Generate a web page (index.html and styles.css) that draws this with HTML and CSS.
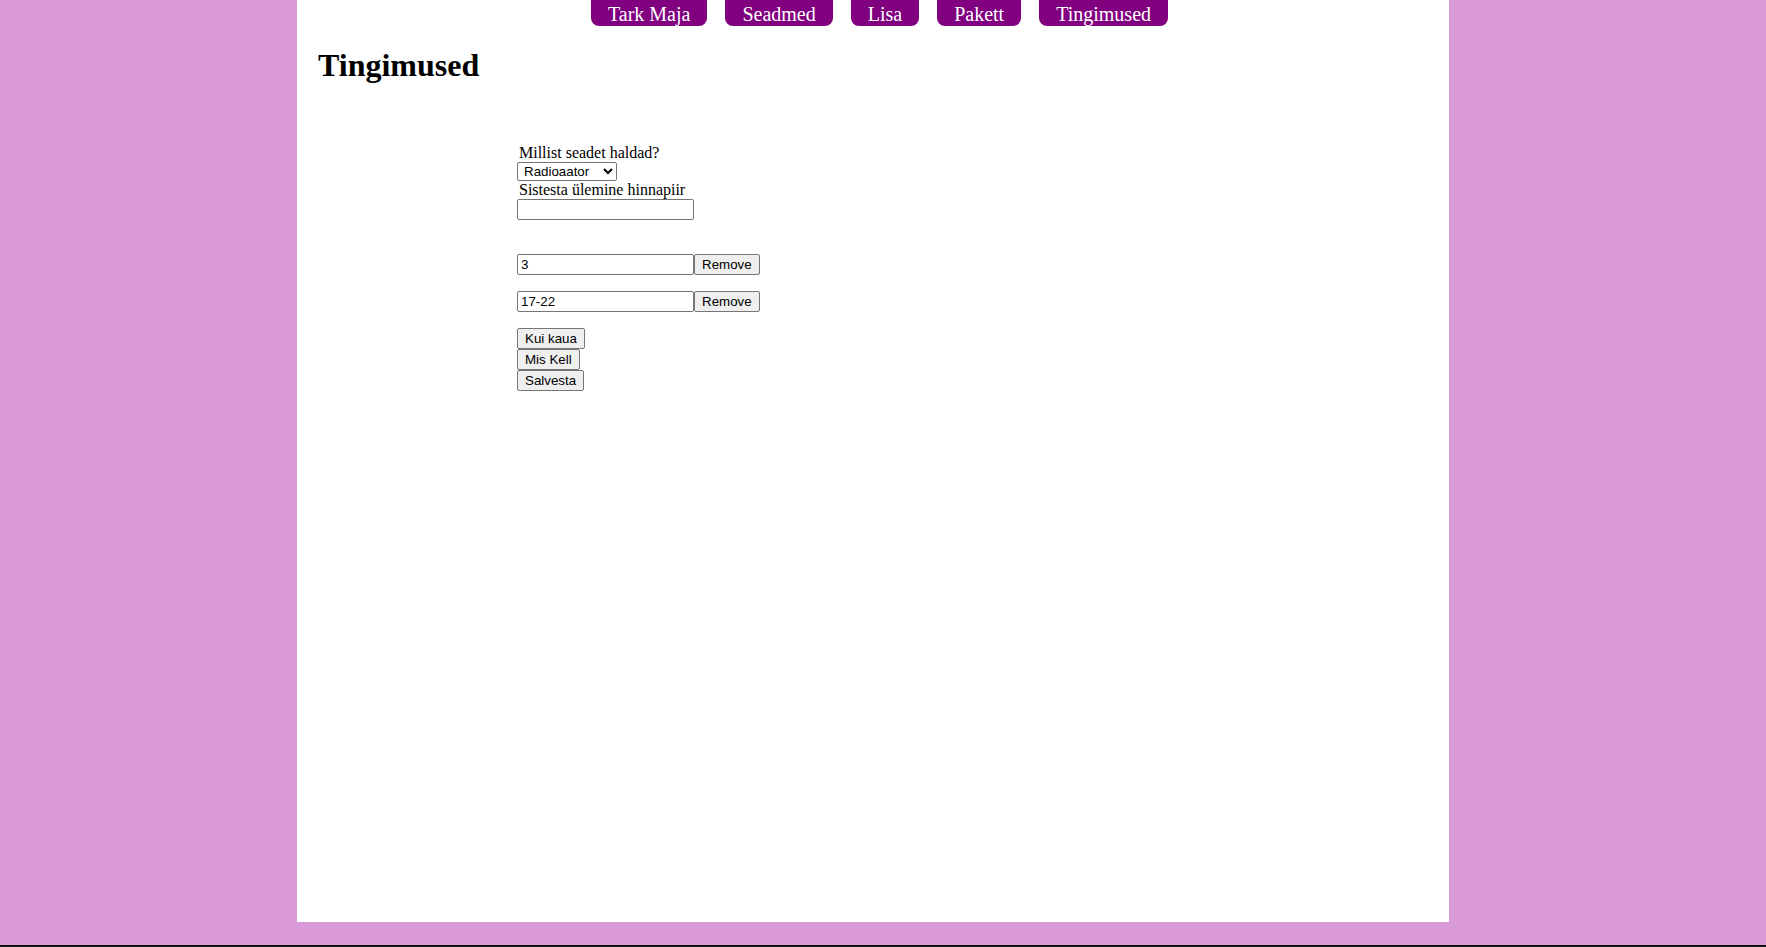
FILE: index.html
```html
<!DOCTYPE html>
<html lang="et">
<head>
<meta charset="utf-8">
<title>Tingimused</title>
<link rel="stylesheet" href="styles.css">
</head>
<body>
<div class="page">
  <div class="container">
    <nav class="nav">
      <a class="nav-btn" href="#">Tark Maja</a>
      <a class="nav-btn" href="#">Seadmed</a>
      <a class="nav-btn" href="#">Lisa</a>
      <a class="nav-btn" href="#">Pakett</a>
      <a class="nav-btn" href="#">Tingimused</a>
    </nav>
    <h1 class="title">Tingimused</h1>
    <form class="form">
      <label class="label">Millist seadet haldad?</label>
      <select class="select">
        <option>Radioaator</option>
      </select>
      <label class="label">Sistesta ülemine hinnapiir</label>
      <input class="input" type="text" value="">
      <div class="rows">
        <div class="row">
          <input class="input" type="text" value="3">
          <button class="btn" type="button">Remove</button>
        </div>
        <div class="row">
          <input class="input" type="text" value="17-22">
          <button class="btn" type="button">Remove</button>
        </div>
      </div>
      <div class="actions">
        <button class="btn" type="button">Kui kaua</button>
        <button class="btn" type="button">Mis Kell</button>
        <button class="btn" type="button">Salvesta</button>
      </div>
    </form>
  </div>
  <div class="footer-line"></div>
</div>
</body>
</html>
```

FILE: styles.css
```css
html, body {
  margin: 0;
  padding: 0;
  height: 947px;
  overflow: hidden;
}

body {
  background: #da99d8;
  font-family: "Liberation Serif", "Times New Roman", serif;
  color: #000;
}

.page {
  display: flex;
  flex-direction: column;
  height: 947px;
}

.container {
  width: 1152px;
  height: 922px;
  margin-left: 297px;
  background: #fff;
  box-sizing: border-box;
  padding-left: 21px;
}

.nav {
  display: flex;
  justify-content: center;
  gap: 18px;
  padding-right: 8px;
}

.nav-btn {
  display: block;
  background: #800080;
  color: #fff;
  text-decoration: none;
  font-size: 20px;
  line-height: 22px;
  padding: 3px 17px 1px;
  border-radius: 0 0 8px 8px;
}

.title {
  font-size: 32px;
  font-weight: bold;
  margin: 21px 0 0;
  line-height: 37px;
}

.form {
  display: flex;
  flex-direction: column;
  align-items: flex-start;
  margin-left: 199px;
  margin-top: 60px;
}

.label {
  display: block;
  font-size: 16px;
  line-height: 18px;
  padding-left: 2px;
}

.select {
  width: 100px;
  height: 19px;
  font-family: "Liberation Sans", Arial, sans-serif;
  font-size: 13.33px;
  border: 1px solid #767676;
  border-radius: 2px;
  background: #fff;
  color: #000;
  padding: 0 0 0 2px;
  margin: 0;
}

.input {
  width: 177px;
  height: 21px;
  box-sizing: border-box;
  font-family: "Liberation Sans", Arial, sans-serif;
  font-size: 13.33px;
  border: 1px solid #767676;
  border-radius: 2px;
  padding: 1px 3px;
  margin: 0;
  color: #000;
}

.rows {
  display: flex;
  flex-direction: column;
  gap: 16px;
  margin-top: 34px;
}

.row {
  display: flex;
}

.btn {
  height: 21px;
  box-sizing: border-box;
  font-family: "Liberation Sans", Arial, sans-serif;
  font-size: 13.33px;
  color: #000;
  background: #efefef;
  border: 1px solid #767676;
  border-radius: 2px;
  padding: 1px 7px;
  margin: 0;
  line-height: 17px;
}

.actions {
  display: flex;
  flex-direction: column;
  align-items: flex-start;
  margin-top: 16px;
}

.footer-line {
  margin-top: 23px;
  height: 2px;
  background: #111;
}
```
